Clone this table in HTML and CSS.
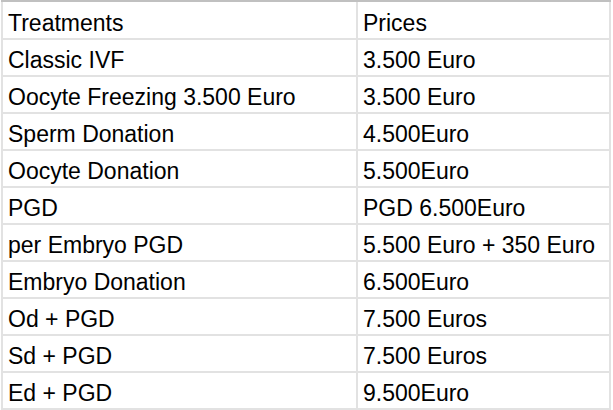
FILE: index.html
```html
<!DOCTYPE html>
<html>
<head>
<meta charset="utf-8">
<link rel="stylesheet" href="styles.css">
</head>
<body>
<div class="sheet">
  <div class="cell">Treatments</div><div class="cell">Prices</div>
  <div class="cell">Classic IVF</div><div class="cell">3.500 Euro</div>
  <div class="cell">Oocyte Freezing 3.500 Euro</div><div class="cell">3.500 Euro</div>
  <div class="cell">Sperm Donation</div><div class="cell">4.500Euro</div>
  <div class="cell">Oocyte Donation</div><div class="cell">5.500Euro</div>
  <div class="cell">PGD</div><div class="cell">PGD 6.500Euro</div>
  <div class="cell">per Embryo PGD</div><div class="cell">5.500 Euro + 350 Euro</div>
  <div class="cell">Embryo Donation</div><div class="cell">6.500Euro</div>
  <div class="cell">Od + PGD</div><div class="cell">7.500 Euros</div>
  <div class="cell">Sd + PGD</div><div class="cell">7.500 Euros</div>
  <div class="cell">Ed + PGD</div><div class="cell">9.500Euro</div>
</div>
</body>
</html>
```
FILE: styles.css
```css
html, body {
  margin: 0;
  padding: 0;
  background: #ffffff;
}
.sheet {
  margin-left: 1px;
  width: 610px;
  box-sizing: border-box;
  display: grid;
  grid-template-columns: 353px 251px;
  grid-template-rows: 36px repeat(10, 35px);
  gap: 2px;
  padding: 0 2px 2px 2px;
  border-top: 2px solid #c0c0c0;
  background: #e2e2e2;
  font-family: "Liberation Sans", Arial, sans-serif;
  font-size: 23px;
  color: #000;
}
.cell {
  background: #ffffff;
  display: flex;
  align-items: flex-end;
  padding: 0 5px 3.5px 5px;
  line-height: 23px;
  white-space: nowrap;
  overflow: hidden;
}
```
